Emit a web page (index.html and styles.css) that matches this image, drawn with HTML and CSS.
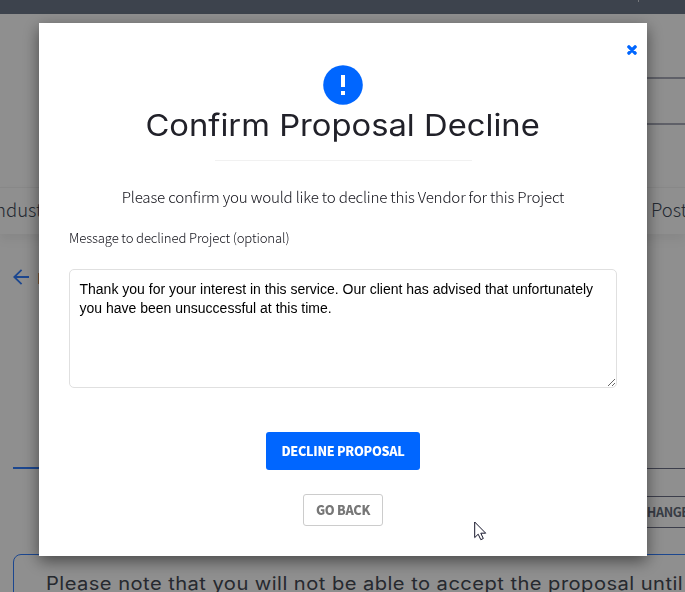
FILE: index.html
```html
<!DOCTYPE html>
<html lang="en">
<head>
    <meta charset="UTF-8">
    <meta name="viewport" content="width=device-width, initial-scale=1.0">
    <title>Confirm Proposal Decline</title>
    <link rel="stylesheet" href="styles.css">
</head>
<body>

    <!-- Page behind the modal -->
    <div class="page">
        <div class="topbar"><span class="topbar-divider"></span></div>
        <header class="header">
            <div class="search"></div>
        </header>
        <nav class="nav">
            <span class="nav-left">Industry</span>
            <span class="nav-right">Post</span>
        </nav>
        <main class="content">
            <div class="back">
                <svg width="16" height="16" viewBox="0 0 16 16" fill="none" stroke="currentColor" stroke-width="1.8">
                    <path d="M16 8H1.2M8.6 .8L1.2 8l7.4 7.2"/>
                </svg>
                <span>Back</span>
            </div>
            <div class="tabs"><span class="tab-active"></span></div>
            <div class="actions">
                <span class="change-btn">CHANGE</span>
            </div>
            <div class="notice">
                <span class="notice-text">Please note that you will not be able to accept the proposal until</span>
            </div>
        </main>
    </div>

    <!-- Modal -->
    <div class="overlay">
        <div class="modal">
            <div class="modal-top">
                <button class="close" type="button" aria-label="Close">
                    <svg width="10" height="10" viewBox="0 0 10 10" stroke="#0066ff" stroke-width="3.4" stroke-linecap="round">
                        <path d="M1.9 1.9l6.2 6.2M8.1 1.9L1.9 8.1"/>
                    </svg>
                </button>
            </div>
            <svg class="alert-icon" width="40" height="40" viewBox="0 0 40 40">
                <circle cx="20" cy="20" r="19.8" fill="#0066ff"/>
                <path d="M18 10h4v12h-4zM18 26h4v4h-4z" fill="#fff"/>
            </svg>
            <h1><span class="title">Confirm Proposal Decline</span></h1>
            <hr>
            <p class="question">Please confirm you would like to decline this Vendor for this Project</p>
            <label for="message">Message to declined Project (optional)</label>
            <textarea id="message" name="message" spellcheck="false">Thank you for your interest in this service. Our client has advised that unfortunately you have been unsuccessful at this time.</textarea>
            <button class="btn btn-primary" type="submit">DECLINE PROPOSAL</button>
            <button class="btn btn-default" type="button">GO BACK</button>
        </div>
    </div>

    <svg class="cursor" width="13" height="20" viewBox="0 0 13 20">
        <path d="M.7 1v15.6l3.5-3.4 2.6 5.5 2.5-1.2-2.5-5.3h4.9z" fill="#fff" stroke="#15152a" stroke-width="1"/>
    </svg>

</body>
</html>
```
FILE: styles.css
```css
* {
    box-sizing: border-box;
}

body {
    margin: 0;
    height: 592px;
    overflow: hidden;
    font-family: "Noto Sans CJK SC", "Noto Sans", sans-serif;
    color: #212129;
}

/* Page */
.page {
    height: 592px;
    overflow: hidden;
    background-color: #ffffff;
}

.topbar {
    height: 14px;
    padding-left: 638px;
    background-color: #6d7889;
}

.topbar-divider {
    display: block;
    width: 1px;
    height: 2px;
    background-color: #d0d4dc;
}

.header {
    height: 173px;
    padding: 63px 0 0 300px;
}

.search {
    height: 48px;
    border: 2px solid #a9abb9;
    border-right: none;
}

.nav {
    height: 47px;
    display: flex;
    justify-content: space-between;
    align-items: center;
    padding-bottom: 5px;
    border-top: 1px solid #f2f2f2;
    box-shadow: 0 6px 10px rgba(0, 0, 0, 0.06);
    font-size: 18.5px;
    font-weight: 300;
    color: #414a58;
    white-space: nowrap;
}

.nav-left {
    margin-left: -10px;
}

.nav-right {
    width: 34px;
}

.content {
    padding: 35px 0 0 13px;
}

.back {
    height: 16px;
    display: flex;
    align-items: center;
    gap: 8px;
    color: #337fff;
}

.back span {
    color: #694e46;
    font-size: 15px;
}

.tabs {
    height: 2px;
    margin-top: 182px;
    background: linear-gradient(#6c6f86, #6c6f86) 0 1px / 100% 1px no-repeat;
}

.tab-active {
    display: block;
    width: 120px;
    height: 2px;
    background-color: #337fff;
}

.actions {
    display: flex;
    justify-content: flex-end;
    margin-top: 27px;
    margin-right: -12px;
}

.change-btn {
    width: 70px;
    height: 32px;
    padding-left: 11px;
    border: 1px solid #6c6f86;
    font-size: 12.6px;
    letter-spacing: -0.4px;
    line-height: 29px;
    font-weight: 700;
    color: #636b79;
}

.notice {
    height: 60px;
    margin-top: 26px;
    margin-right: -20px;
    padding: 16px 0 0 32px;
    border: 1px solid #337fff;
    border-radius: 8px;
}

.notice-text {
    display: inline-block;
    font-family: Inter, sans-serif;
    font-size: 18px;
    line-height: 24px;
    letter-spacing: 0.4px;
    white-space: nowrap;
    transform: scaleX(1.119);
    transform-origin: left;
    color: #454a54;
}

/* Modal */
.overlay {
    position: fixed;
    top: 0;
    left: 0;
    width: 685px;
    height: 592px;
    padding: 23px 38px 0 39px;
    background-color: rgba(0, 0, 0, 0.44);
}

.modal {
    height: 533px;
    padding: 0 30px;
    display: flex;
    flex-direction: column;
    align-items: center;
    background-color: #ffffff;
    box-shadow: 0 5px 15px rgba(0, 0, 0, 0.5);
}

.modal-top {
    width: 100%;
    height: 42px;
    display: flex;
    justify-content: flex-end;
    padding-top: 22px;
}

.close {
    width: 10px;
    height: 10px;
    margin-right: -20px;
    padding: 0;
    border: none;
    background: none;
    cursor: pointer;
}

.close svg {
    display: block;
}

h1 {
    margin: 0;
    height: 40px;
    font-family: Inter, sans-serif;
    font-size: 30px;
    font-weight: 400;
    line-height: 41px;
    white-space: nowrap;
    color: #212129;
}

.title {
    display: inline-block;
    transform: scaleX(1.092);
}

hr {
    width: 257px;
    margin: 15px 0 0;
    border: none;
    border-top: 1px solid #f1f1f1;
}

.question {
    margin: 23px 0 0;
    height: 24px;
    font-size: 15.2px;
    letter-spacing: -0.21px;
    line-height: 24px;
    font-weight: 300;
    white-space: nowrap;
    color: #101018;
}

label {
    align-self: flex-start;
    height: 20px;
    margin-top: 20px;
    font-size: 13.2px;
    letter-spacing: -0.16px;
    line-height: 20px;
    font-weight: 300;
    color: #101018;
}

textarea {
    flex: none;
    width: 548px;
    height: 119px;
    margin-top: 21px;
    padding: 10px 10px 10px 9.5px;
    border: 1px solid #e0e0e0;
    border-radius: 5px;
    font-family: "Liberation Sans", Arial, sans-serif;
    font-size: 14px;
    line-height: 19px;
    color: #000000;
}

.btn {
    padding: 0 0 2px;
    border-radius: 3px;
    font-family: inherit;
    font-size: 12.6px;
    letter-spacing: -0.3px;
    font-weight: 900;
    white-space: nowrap;
    cursor: pointer;
}

.btn-primary {
    width: 154px;
    height: 38px;
    margin-top: 44px;
    border: none;
    background-color: #0066ff;
    color: #ffffff;
}

.btn-default {
    width: 80px;
    height: 32px;
    margin-top: 24px;
    border: 1px solid #cccccc;
    background-color: #ffffff;
    color: #777777;
}

.cursor {
    position: absolute;
    left: 474px;
    top: 521px;
}
```
